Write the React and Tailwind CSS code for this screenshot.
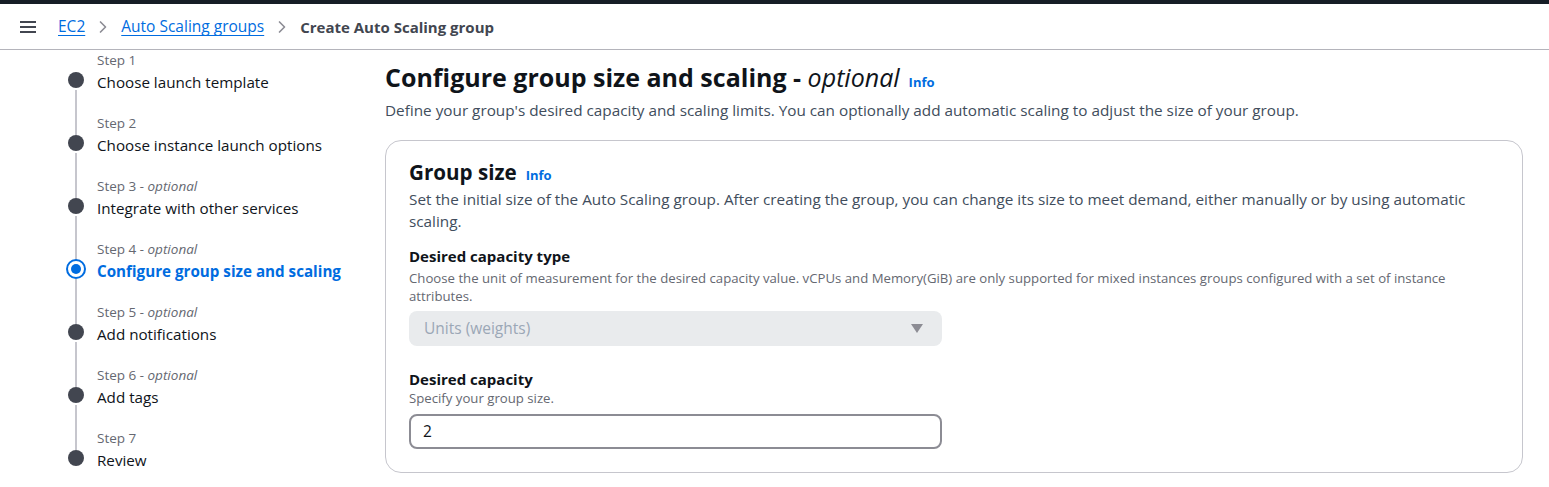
import { ChevronRight } from 'lucide-react'

const steps = [
  { label: 'Step 1', title: 'Choose launch template' },
  { label: 'Step 2', title: 'Choose instance launch options' },
  { label: 'Step 3', optional: true, title: 'Integrate with other services' },
  { label: 'Step 4', optional: true, title: 'Configure group size and scaling', active: true },
  { label: 'Step 5', optional: true, title: 'Add notifications' },
  { label: 'Step 6', optional: true, title: 'Add tags' },
  { label: 'Step 7', title: 'Review' },
]

function Hamburger() {
  return (
    <svg width="18" height="14" viewBox="0 0 18 14" className="text-[#424650]">
      <rect x="1" y="1" width="16" height="2" fill="currentColor" />
      <rect x="1" y="6" width="16" height="2" fill="currentColor" />
      <rect x="1" y="11" width="16" height="2" fill="currentColor" />
    </svg>
  )
}

function Step({ step, first, last }) {
  return (
    <div className="flex">
      {/* rail */}
      <div className="w-5 flex flex-col items-center">
        <div className={`h-[21px] w-[2px] ${first ? '' : 'bg-[#c6c6cd]'}`} />
        {step.active ? (
          <div className="w-5 h-5 rounded-full border-2 border-[#006ce0] flex items-center justify-center my-[-2px]">
            <div className="w-[10px] h-[10px] rounded-full bg-[#006ce0]" />
          </div>
        ) : (
          <div className="w-4 h-4 rounded-full bg-[#424650]" />
        )}
        <div className={`flex-1 w-[2px] mt-[2px] ${last ? '' : 'bg-[#c6c6cd]'}`} />
      </div>
      <div className="pl-[11px] pb-[20px]">
        <div className="text-[13.5px] leading-[16px] text-[#656871] pt-[1px] -mb-[1px]">
          {step.label}
          {step.optional && <span className="italic"> - optional</span>}
        </div>
        <div
          className={`mt-[3px] text-[15.2px] leading-[24px] ${
            step.active ? 'font-bold text-[#006ce0]' : 'text-[#0f141a]'
          }`}
        >
          {step.title}
        </div>
      </div>
    </div>
  )
}

export default function App() {
  return (
    <div className="min-h-screen bg-white font-['Open_Sans',sans-serif] text-[#0f141a]">
      {/* top strip */}
      <div className="h-1 bg-[#161d26]" />

      {/* breadcrumbs */}
      <div className="h-[46px] border-b border-[#b4b4bb] flex items-center pl-[19px] pt-[1px]">
        <Hamburger />
        <div className="flex items-center ml-[21px] text-[15.5px]">
          <a className="text-[#006ce0] underline underline-offset-[3px]">EC2</a>
          <ChevronRight className="w-5 h-5 text-[#8c8c94] mx-[8px]" strokeWidth={2} />
          <a className="text-[#006ce0] underline underline-offset-[3px]">Auto Scaling groups</a>
          <ChevronRight className="w-5 h-5 text-[#8c8c94] mx-[8px]" strokeWidth={2} />
          <span className="text-[15px] font-bold text-[#424650]">Create Auto Scaling group</span>
        </div>
      </div>

      <div className="flex">
        {/* Wizard steps */}
        <nav className="w-[385px] shrink-0 pl-[66px] pt-[1px]">
          {steps.map((s, i) => (
            <Step key={s.label} step={s} first={i === 0} last={i === steps.length - 1} />
          ))}
        </nav>

        {/* Main */}
        <main className="flex-1 pr-[26px] pt-[11px]">
          <div className="flex items-baseline gap-[9px]">
            <h1 className="text-[25px] leading-[32px] font-bold">
              Configure group size and scaling - <span className="italic font-normal">optional</span>
            </h1>
            <a className="text-[13px] font-bold text-[#006ce0]">Info</a>
          </div>
          <p className="mt-[6px] text-[15.3px] leading-[22px] text-[#414d5c]">
            Define your group's desired capacity and scaling limits. You can optionally add automatic scaling to adjust the size of your group.
          </p>

          <section className="mt-[19px] border border-[#c6c6cd] rounded-2xl px-[23px] pt-[17px] pb-[23px]">
            <div className="flex items-baseline gap-[9px]">
              <h2 className="text-[20.6px] leading-[28px] font-bold">Group size</h2>
              <a className="text-[13px] font-bold text-[#006ce0]">Info</a>
            </div>
            <p className="mt-[2px] text-[15.3px] leading-[22px] text-[#414d5c]">
              Set the initial size of the Auto Scaling group. After creating the group, you can change its size to meet demand, either manually or by using automatic scaling.
            </p>

            <div className="mt-[14px]">
              <div className="text-[15px] leading-[20px] font-bold">Desired capacity type</div>
              <p className="mt-[3px] text-[13.2px] leading-[18px] text-[#656871]">
                Choose the unit of measurement for the desired capacity value. vCPUs and Memory(GiB) are only supported for mixed instances groups configured with a set of instance attributes.
              </p>
              <div className="mt-[6px] w-[533px] h-[35px] rounded-lg bg-[#e9ebed] flex items-center justify-between pl-[15px] pr-[19px] text-[15.5px] text-[#9ba7b6]">
                <span>Units (weights)</span>
                <svg width="12" height="9" viewBox="0 0 12 9">
                  <path d="M0 0 H12 L6 9 Z" fill="#8c8c94" />
                </svg>
              </div>
            </div>

            <div className="mt-[23px]">
              <div className="text-[15px] leading-[20px] font-bold">Desired capacity</div>
              <p className="text-[13.2px] leading-[18px] text-[#656871]">Specify your group size.</p>
              <div className="mt-[7px] w-[533px] h-[35px] rounded-lg border-2 border-[#8c8c94] flex items-center pl-[12px] text-[15.5px] text-[#0f141a]">
                2
              </div>
            </div>
          </section>
        </main>
      </div>
    </div>
  )
}
